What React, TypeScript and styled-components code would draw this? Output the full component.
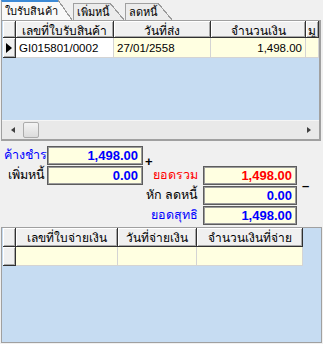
import React, { FC } from 'react';
import styled, { createGlobalStyle, css } from 'styled-components';

const FONT = `"Liberation Sans", "Noto Sans", sans-serif`;
const GRID_BLUE = '#c6dcf2';
const CELL_YELLOW = '#ffffe1';

const GlobalStyle = createGlobalStyle`
  html, body, #root {
    margin: 0;
    padding: 0;
    height: 100%;
  }
  body {
    background: #f0f0f0;
    font-family: ${FONT};
    overflow: hidden;
  }
`;

const Window = styled.div`
  width: 323px;
  height: 344px;
  display: flex;
  flex-direction: column;
  background: #f0f0f0;
`;

const TabStrip = styled.div`
  display: flex;
  align-items: flex-end;
  height: 20px;
  padding-left: 1px;
`;

const Tab = styled.div<{ $active?: boolean }>`
  position: relative;
  box-sizing: border-box;
  height: ${(p) => (p.$active ? 20 : 17)}px;
  margin-right: 15px;
  padding: 0 0 0 3px;
  border-left: 1px solid #a0a0a0;
  border-top: ${(p) => (p.$active ? '2px solid #3c8ad6' : '1px solid #a0a0a0')};
  background: ${(p) => (p.$active ? '#f9f9f9' : '#ececec')};
  font-size: 11px;
  line-height: ${(p) => (p.$active ? 18 : 16)}px;
  color: #000;
  white-space: nowrap;

  &::after {
    content: '';
    position: absolute;
    top: ${(p) => (p.$active ? -2 : -1)}px;
    left: 100%;
    width: 14px;
    height: calc(100% + ${(p) => (p.$active ? 2 : 1)}px);
    background: linear-gradient(
      to top right,
      ${(p) => (p.$active ? '#f9f9f9' : '#ececec')} calc(50% - 0.6px),
      #9a9a9a calc(50% - 0.6px),
      #9a9a9a calc(50% + 0.6px),
      transparent calc(50% + 0.6px)
    );
  }
`;

const TabPage = styled.div`
  flex: 1;
  display: flex;
  flex-direction: column;
  padding: 0 1px 1px 1px;
  min-height: 0;
`;

const GridFrame = styled.div<{ $height?: number }>`
  display: flex;
  flex-direction: column;
  overflow: hidden;
  background: ${GRID_BLUE};
  border-left: 1px solid #a0a0a0;
  border-top: 1px solid #a0a0a0;
  ${(p) =>
    p.$height
      ? css`
          height: ${p.$height}px;
          flex: none;
          margin-right: 1px;
          border-right: 2px solid #a0a0a0;
          border-bottom: 2px solid #a0a0a0;
        `
      : css`
          flex: 1;
          border-right: 1px solid #a0a0a0;
          border-bottom: 1px solid #a0a0a0;
        `}
`;

const Row = styled.div<{ $h: number }>`
  display: flex;
  flex: none;
  height: ${(p) => p.$h}px;
  padding-left: 1px;
`;

const HeadCell = styled.div<{ $w?: number; $left?: boolean }>`
  box-sizing: border-box;
  ${(p) => (p.$w ? `width: ${p.$w}px; flex: none;` : 'flex: 1;')}
  height: 100%;
  background: #f0f0f0;
  border-right: 1px solid #303030;
  border-bottom: 1px solid #303030;
  box-shadow: inset 1px 1px 0 #ffffff, inset -1px -1px 0 #a8a8a8;
  padding-left: ${(p) => (p.$left ? 2 : 0)}px;
  font-size: 12px;
  text-align: ${(p) => (p.$left ? 'left' : 'center')};
  white-space: nowrap;
  overflow: hidden;
  color: #000;
`;

const Cell = styled.div<{ $w?: number; $bg?: string; $align?: 'left' | 'right' }>`
  box-sizing: border-box;
  ${(p) => (p.$w ? `width: ${p.$w}px; flex: none;` : 'flex: 1;')}
  height: 100%;
  background: ${(p) => p.$bg ?? CELL_YELLOW};
  border-right: 1px solid #d4d4d4;
  border-bottom: 1px solid #d4d4d4;
  padding: 0 3px;
  font-size: 11.5px;
  display: flex;
  align-items: center;
  justify-content: ${(p) => (p.$align === 'right' ? 'flex-end' : 'flex-start')};
  white-space: nowrap;
  overflow: hidden;
  color: #000;
`;

const Indicator = styled.div`
  box-sizing: border-box;
  width: 13px;
  flex: none;
  height: 100%;
  background: #f0f0f0;
  border-right: 1px solid #303030;
  border-bottom: 1px solid #303030;
  box-shadow: inset 1px 1px 0 #ffffff, inset -1px -1px 0 #a8a8a8;
  display: flex;
  align-items: center;
  padding-left: 3px;
`;

const Pointer = styled.span`
  width: 0;
  height: 0;
  border-top: 5px solid transparent;
  border-bottom: 5px solid transparent;
  border-left: 6px solid #000;
`;

const Fill = styled.div`
  flex: 1;
`;

const HScroll = styled.div`
  flex: none;
  height: 18px;
  display: flex;
  align-items: center;
  background: #e9e9e9;
  border-top: 1px solid #f5f5f5;
  padding: 0 8px 0 9px;
`;

const Arrow = styled.span<{ $dir: 'left' | 'right' }>`
  width: 0;
  height: 0;
  border-top: 3px solid transparent;
  border-bottom: 3px solid transparent;
  ${(p) =>
    p.$dir === 'left'
      ? 'border-right: 4px solid #404040;'
      : 'border-left: 4px solid #404040; margin-left: auto;'}
`;

const Thumb = styled.span`
  box-sizing: border-box;
  width: 16px;
  height: 16px;
  margin-left: 8px;
  border: 1px solid #acacac;
  border-radius: 2px;
  background: linear-gradient(#f4f4f4, #dcdcdc);
`;

const Summary = styled.div`
  flex: none;
  display: grid;
  grid-template-columns: 43px 96px 60px 94px 1fr;
  grid-template-rows: repeat(4, 20px);
  padding: 5px 0 1px 3px;
`;

const Label = styled.div<{ $color?: string; $col: number; $row: number }>`
  grid-column: ${(p) => p.$col};
  grid-row: ${(p) => p.$row};
  align-self: start;
  height: 19px;
  line-height: 19px;
  text-align: right;
  padding-right: ${(p) => (p.$col === 1 ? 2 : 5)}px;
  font-size: 12.5px;
  color: ${(p) => p.$color ?? '#000'};
  white-space: nowrap;
`;

const ValueBox = styled.div<{ $color: string; $col: number; $row: number }>`
  grid-column: ${(p) => p.$col};
  grid-row: ${(p) => p.$row};
  box-sizing: border-box;
  height: 19px;
  background: ${CELL_YELLOW};
  border: 1px solid #5c5c5c;
  box-shadow: inset 0 0 0 1px #9c9c9c;
  padding-right: 4px;
  text-align: right;
  font-size: 13px;
  font-weight: bold;
  line-height: 17px;
  color: ${(p) => p.$color};
`;

const Sign = styled.div<{ $col: number; $rows: string }>`
  grid-column: ${(p) => p.$col};
  grid-row: ${(p) => p.$rows};
  align-self: center;
  justify-self: start;
  margin-left: ${(p) => (p.$col === 3 ? 2 : 5)}px;
  padding-bottom: ${(p) => (p.$col === 3 ? 10 : 2)}px;
  font-size: 13px;
  font-weight: bold;
  color: #000;
`;

const PaidRow = styled(Row)`
  background: ${GRID_BLUE};
`;

const App: FC = () => {
  return (
    <Window>
      <GlobalStyle />
      <TabStrip>
        <Tab $active>ใบรับสินค้า</Tab>
        <Tab>เพิ่มหนี้</Tab>
        <Tab>ลดหนี้</Tab>
      </TabStrip>
      <TabPage>
        <GridFrame $height={118}>
          <Row $h={17}>
            <Indicator />
            <HeadCell $w={98}>เลขที่ใบรับสินค้า</HeadCell>
            <HeadCell $w={97}>วันที่ส่ง</HeadCell>
            <HeadCell $w={95}>จำนวนเงิน</HeadCell>
            <HeadCell $left>มู</HeadCell>
          </Row>
          <Row $h={20}>
            <Indicator>
              <Pointer />
            </Indicator>
            <Cell $w={98} $bg="#ffffff">
              GI015801/0002
            </Cell>
            <Cell $w={97}>27/01/2558</Cell>
            <Cell $w={95} $align="right">
              1,498.00
            </Cell>
            <Cell />
          </Row>
          <Fill />
          <HScroll>
            <Arrow $dir="left" />
            <Thumb />
            <Arrow $dir="right" />
          </HScroll>
        </GridFrame>

        <Summary>
          <Label $col={1} $row={1} $color="#0000ff">
            ค้างชำระ
          </Label>
          <ValueBox $col={2} $row={1} $color="#0000ff">
            1,498.00
          </ValueBox>
          <Label $col={1} $row={2}>
            เพิ่มหนี้
          </Label>
          <ValueBox $col={2} $row={2} $color="#0000ff">
            0.00
          </ValueBox>
          <Sign $col={3} $rows="1 / 3">
            +
          </Sign>
          <Label $col={3} $row={2} $color="#ff0000">
            ยอดรวม
          </Label>
          <ValueBox $col={4} $row={2} $color="#ff0000">
            1,498.00
          </ValueBox>
          <Label $col={3} $row={3}>
            หัก ลดหนี้
          </Label>
          <ValueBox $col={4} $row={3} $color="#0000ff">
            0.00
          </ValueBox>
          <Sign $col={5} $rows="2 / 4">
            –
          </Sign>
          <Label $col={3} $row={4} $color="#0000ff">
            ยอดสุทธิ
          </Label>
          <ValueBox $col={4} $row={4} $color="#0000ff">
            1,498.00
          </ValueBox>
        </Summary>

        <GridFrame>
          <PaidRow $h={19}>
            <Indicator />
            <HeadCell $w={102}>เลขที่ใบจ่ายเงิน</HeadCell>
            <HeadCell $w={79}>วันที่จ่ายเงิน</HeadCell>
            <HeadCell $w={106}>จำนวนเงินที่จ่าย</HeadCell>
          </PaidRow>
          <PaidRow $h={19}>
            <Indicator />
            <Cell $w={102} />
            <Cell $w={79} />
            <Cell $w={106} />
          </PaidRow>
          <Fill />
        </GridFrame>
      </TabPage>
    </Window>
  );
};

export default App;
